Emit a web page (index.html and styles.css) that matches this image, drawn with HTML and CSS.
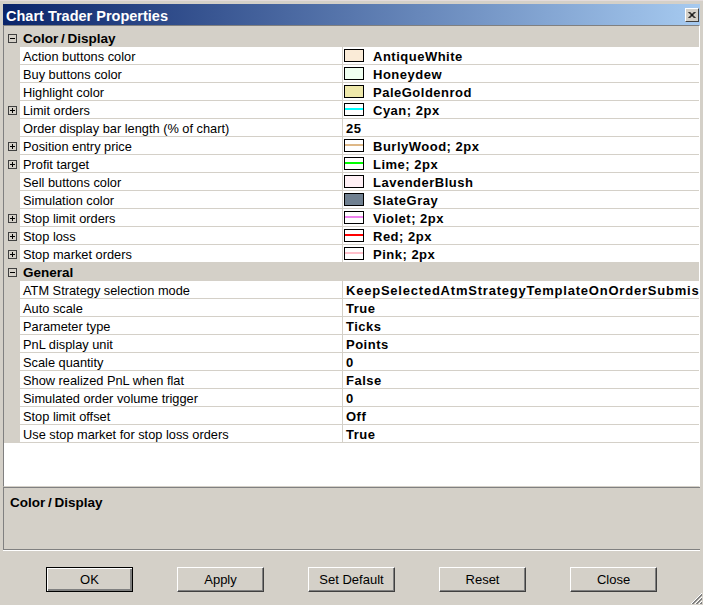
FILE: index.html
```html
<!DOCTYPE html>
<html>
<head lang="en">
    <meta charset="UTF-8">
    <title>Chart Trader Properties</title>
    <link rel="stylesheet" href="styles.css">
</head>
<body>
    <div class="window">
        <div class="titlebar">
            <span class="title">Chart Trader Properties</span>
            <span class="close">
                <svg width="12" height="11" viewBox="0 0 12 11"><path d="M2.5 2 L8.5 8 M3.5 2 L9.5 8 M8.5 2 L2.5 8 M9.5 2 L3.5 8" stroke="#000" stroke-width="1"/></svg>
            </span>
        </div>

        <div class="grid">
            <div class="cat first"><span class="gut"><i class="exp"></i></span><span class="cat-name">Color / Display</span></div>
            <div class="row"><span class="gut"></span><span class="name">Action buttons color</span><span class="val"><i class="sw sw-antique"></i>AntiqueWhite</span></div>
            <div class="row"><span class="gut"></span><span class="name">Buy buttons color</span><span class="val"><i class="sw sw-honeydew"></i>Honeydew</span></div>
            <div class="row"><span class="gut"></span><span class="name">Highlight color</span><span class="val"><i class="sw sw-golden"></i>PaleGoldenrod</span></div>
            <div class="row"><span class="gut"><i class="exp plus"></i></span><span class="name">Limit orders</span><span class="val"><i class="sw line ln-cyan"></i>Cyan; 2px</span></div>
            <div class="row"><span class="gut"></span><span class="name">Order display bar length (% of chart)</span><span class="val">25</span></div>
            <div class="row"><span class="gut"><i class="exp plus"></i></span><span class="name">Position entry price</span><span class="val"><i class="sw line ln-burly"></i>BurlyWood; 2px</span></div>
            <div class="row"><span class="gut"><i class="exp plus"></i></span><span class="name">Profit target</span><span class="val"><i class="sw line ln-lime"></i>Lime; 2px</span></div>
            <div class="row"><span class="gut"></span><span class="name">Sell buttons color</span><span class="val"><i class="sw sw-blush"></i>LavenderBlush</span></div>
            <div class="row"><span class="gut"></span><span class="name">Simulation color</span><span class="val"><i class="sw sw-slate"></i>SlateGray</span></div>
            <div class="row"><span class="gut"><i class="exp plus"></i></span><span class="name">Stop limit orders</span><span class="val"><i class="sw line ln-violet"></i>Violet; 2px</span></div>
            <div class="row"><span class="gut"><i class="exp plus"></i></span><span class="name">Stop loss</span><span class="val"><i class="sw line ln-red"></i>Red; 2px</span></div>
            <div class="row"><span class="gut"><i class="exp plus"></i></span><span class="name">Stop market orders</span><span class="val"><i class="sw line ln-pink"></i>Pink; 2px</span></div>

            <div class="cat"><span class="gut"><i class="exp"></i></span><span class="cat-name">General</span></div>
            <div class="row"><span class="gut"></span><span class="name">ATM Strategy selection mode</span><span class="val wide">KeepSelectedAtmStrategyTemplateOnOrderSubmis</span></div>
            <div class="row"><span class="gut"></span><span class="name">Auto scale</span><span class="val">True</span></div>
            <div class="row"><span class="gut"></span><span class="name">Parameter type</span><span class="val">Ticks</span></div>
            <div class="row"><span class="gut"></span><span class="name">PnL display unit</span><span class="val">Points</span></div>
            <div class="row"><span class="gut"></span><span class="name">Scale quantity</span><span class="val">0</span></div>
            <div class="row"><span class="gut"></span><span class="name">Show realized PnL when flat</span><span class="val">False</span></div>
            <div class="row"><span class="gut"></span><span class="name">Simulated order volume trigger</span><span class="val">0</span></div>
            <div class="row"><span class="gut"></span><span class="name">Stop limit offset</span><span class="val">Off</span></div>
            <div class="row"><span class="gut"></span><span class="name">Use stop market for stop loss orders</span><span class="val">True</span></div>
        </div>

        <div class="desc">Color / Display</div>

        <div class="buttons">
            <a href="javascript:;" class="btn default">OK</a>
            <a href="javascript:;" class="btn">Apply</a>
            <a href="javascript:;" class="btn">Set Default</a>
            <a href="javascript:;" class="btn">Reset</a>
            <a href="javascript:;" class="btn">Close</a>
        </div>

        <svg class="grip" width="13" height="13" viewBox="0 0 13 13">
            <path d="M12 1 L1 12 M12 5 L5 12 M12 9 L9 12" stroke="#fff" stroke-width="1"/>
            <path d="M12 2 L2 12 M12 3 L3 12 M12 6 L6 12 M12 7 L7 12 M12 10 L10 12 M12 11 L11 12" stroke="#808080" stroke-width="1"/>
        </svg>
    </div>
</body>
</html>
```

FILE: styles.css
```css
/* reset */
* {
    box-sizing: border-box;
}

html,
body {
    margin: 0;
    padding: 0;
}

body {
    width: 703px;
    height: 605px;
    overflow: hidden;
    background: #d4d0c8;
    font: 12.8px "Liberation Sans", Arial, sans-serif;
    color: #000;
}

a {
    text-decoration: none;
    color: #000;
}

/* window frame */
.window {
    position: relative;
    height: 605px;
    padding: 3px 3px 0 3px;
    background: #d4d0c8;
    border-top: 1px solid #e4dcdc;
}

.titlebar {
    height: 21px;
    display: flex;
    align-items: center;
    padding: 2px 0 0 3px;
    background: linear-gradient(to right, #0a246a, #a6caf0);
}

.title {
    font-weight: bold;
    font-size: 14.5px;
    color: #fff;
}

.close {
    margin-left: auto;
    margin-right: 1px;
    margin-top: -1px;
    width: 14px;
    height: 14px;
    display: flex;
    align-items: center;
    justify-content: center;
    background: #d4d0c8;
    border: 1px solid;
    border-color: #fff #404040 #404040 #fff;
}

/* property grid */
.grid {
    height: 462px;
    background: #fff;
    border-top: 1px solid #808080;
    border-left: 1px solid #808080;
    border-right: 1px solid #fff;
    border-bottom: 1px solid #d4d0c8;
}

.row,
.cat {
    display: flex;
    height: 18px;
}

.cat {
    background: #d4d0c8;
    align-items: center;
}

.cat.first {
    height: 21px;
    padding-top: 3px;
}

.cat-name {
    padding-left: 3px;
    font-weight: bold;
    font-size: 13.5px;
    word-spacing: -1px;
}

.gut {
    width: 16px;
    flex: none;
    display: flex;
    align-items: center;
    background: #d4d0c8;
}

.exp {
    position: relative;
    display: block;
    width: 9px;
    height: 9px;
    margin-left: 4px;
    border: 1px solid #404040;
}

.exp::before {
    content: '';
    position: absolute;
    left: 1px;
    top: 3px;
    width: 5px;
    height: 1px;
    background: #000;
}

.exp.plus::after {
    content: '';
    position: absolute;
    left: 3px;
    top: 1px;
    width: 1px;
    height: 5px;
    background: #000;
}

.name {
    width: 323px;
    flex: none;
    padding: 1px 0 0 3px;
    line-height: 17px;
    border-right: 1px solid #d4d0c8;
    border-bottom: 1px solid #d4d0c8;
    white-space: nowrap;
}

.val {
    flex: 1;
    display: flex;
    align-items: center;
    padding: 1px 0 0 3px;
    overflow: hidden;
    white-space: nowrap;
    font-weight: bold;
    font-size: 13px;
    letter-spacing: 0.5px;
    border-bottom: 1px solid #d4d0c8;
}

.val.wide {
    letter-spacing: 0.78px;
}

.sw {
    display: block;
    flex: none;
    width: 20px;
    height: 13px;
    margin: -1px 9px 0 -2px;
    border: 1px solid #000;
}

.sw-antique { background: #faebd7; }
.sw-honeydew { background: #f0fff0; }
.sw-golden { background: #eee8aa; }
.sw-blush { background: #fff0f5; }
.sw-slate { background: #708090; }

.line {
    --c: #000;
    background: linear-gradient(to bottom, #fff 4px, var(--c) 4px, var(--c) 6px, #fff 6px);
}

.ln-cyan { --c: #00ffff; }
.ln-burly { --c: #deb887; }
.ln-lime { --c: #00ff00; }
.ln-violet { --c: #ee82ee; }
.ln-red { --c: #ff0000; }
.ln-pink { --c: #ffc0cb; }

/* description panel */
.desc {
    height: 63px;
    padding: 7px 0 0 6px;
    font-weight: bold;
    font-size: 13.5px;
    word-spacing: -1px;
    border-top: 1px solid #808080;
    border-left: 1px solid #808080;
    border-bottom: 1px solid #808080;
    box-shadow: 0 1px 0 #fff;
}

/* buttons */
.buttons {
    display: flex;
    gap: 44px;
    padding: 17px 0 0 43px;
}

.btn {
    width: 87px;
    height: 25px;
    display: flex;
    align-items: center;
    justify-content: center;
    font-size: 13px;
    background: #d4d0c8;
    border: 1px solid;
    border-color: #fff #404040 #404040 #fff;
    box-shadow: inset -1px -1px #808080;
}

.btn.default {
    border-color: #000;
    box-shadow: inset 1px 1px #fff, inset -2px -2px #808080;
}

.grip {
    position: absolute;
    right: 0;
    bottom: 0;
}
```
